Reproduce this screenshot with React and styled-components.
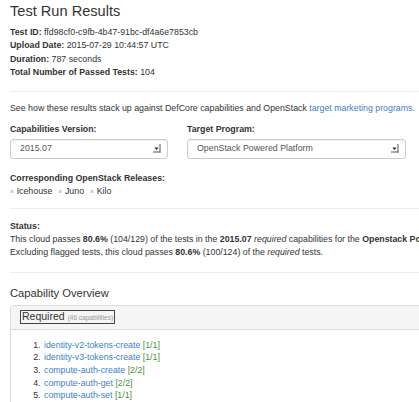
import React from "react";
import styled, { createGlobalStyle } from "styled-components";

const Global = createGlobalStyle`
  html, body { margin: 0; padding: 0; background: #fff; }
  body {
    font-family: "Liberation Sans", Arial, Helvetica, sans-serif;
    font-size: 8.8px;
    line-height: 13.33px;
    color: #333;
    overflow: hidden;
  }
`;

const Page = styled.div`
  width: 714px;
  padding: 0 10px;
  box-sizing: border-box;
`;

const Title = styled.h3`
  margin: 0;
  padding-top: 1px;
  font-size: 14.6px;
  line-height: 20px;
  font-weight: 400;
  color: #333;
`;

const InfoList = styled.div`
  margin-top: 5px;
  display: flex;
  flex-direction: column;
`;

const InfoLine = styled.div`
  line-height: 13.33px;
`;

const Strong = styled.strong`
  font-weight: 700;
`;

const Rule = styled.hr`
  border: 0;
  border-top: 1px solid #eee;
  margin: ${(p) => p.$top}px 0 ${(p) => p.$bottom}px;
`;

const Para = styled.p`
  margin: 0 0 7px;
`;

const Link = styled.a`
  color: #3f80c4;
  text-decoration: none;
`;

const Row = styled.div`
  display: flex;
  gap: 19px;
`;

const Field = styled.div`
  width: ${(p) => p.$w}px;
  display: flex;
  flex-direction: column;
  gap: 3px;
`;

const Label = styled.label`
  font-weight: 700;
`;

const SelectBox = styled.div`
  height: 20px;
  box-sizing: border-box;
  border: 1px solid #ccc;
  border-radius: 3px;
  box-shadow: inset 0 1px 1px rgba(0, 0, 0, 0.06);
  display: flex;
  align-items: center;
  justify-content: space-between;
  padding: 0 6px 0 9px;
  color: #555;
`;

const Releases = styled.div`
  margin-top: 13px;
`;

const ReleaseList = styled.div`
  display: flex;
  gap: 6px;
`;

const Release = styled.span`
  &::before {
    content: "»";
    color: #999;
    font-size: 6.5px;
    margin-right: 3px;
  }
`;

const StatusBlock = styled.div``;

const SectionTitle = styled.h4`
  margin: 0;
  font-size: 11.2px;
  line-height: 16px;
  font-weight: 400;
  color: #333;
`;

const Panel = styled.div`
  margin-top: 4px;
  border: 1px solid #ddd;
  border-radius: 3px;
  box-shadow: 0 1px 1px rgba(0, 0, 0, 0.05);
`;

const PanelHeader = styled.div`
  background: #f5f5f5;
  border-bottom: 1px solid #ddd;
  height: 24px;
  box-sizing: border-box;
  display: flex;
  align-items: center;
  padding-left: 9px;
`;

const Toggle = styled.span`
  border: 1px solid #444;
  padding: 0 1px;
  line-height: 10px;
  display: inline-flex;
  align-items: baseline;
  gap: 3px;
`;

const ToggleMain = styled.span`
  font-size: 10.5px;
  color: #333;
`;

const ToggleSub = styled.span`
  font-size: 6.5px;
  color: #999;
`;

const PanelBody = styled.div`
  padding: 9px 10px 10px;
`;

const CapList = styled.ol`
  margin: 0;
  padding-left: 22px;
  line-height: 12.7px;
  li { padding-left: 1px; }
`;

const Count = styled.span`
  color: #4c8f3e;
`;

function DropArrow() {
  return (
    <svg width="8" height="9" viewBox="0 0 8 9">
      <path d="M1.5 3.5 L5.5 3.5 L3.5 6 Z" fill="#222" />
      <line x1="7" y1="0" x2="7" y2="8.5" stroke="#555" strokeWidth="1" />
      <line x1="0" y1="8" x2="7.5" y2="8" stroke="#555" strokeWidth="1" />
    </svg>
  );
}

const caps = [
  ["identity-v2-tokens-create", "[1/1]"],
  ["identity-v3-tokens-create", "[1/1]"],
  ["compute-auth-create", "[2/2]"],
  ["compute-auth-get", "[2/2]"],
  ["compute-auth-set", "[1/1]"],
];

export default function App() {
  return (
    <>
      <Global />
      <Page>
        <Title>Test Run Results</Title>
        <InfoList>
          <InfoLine><Strong>Test ID:</Strong> ffd98cf0-c9fb-4b47-91bc-df4a6e7853cb</InfoLine>
          <InfoLine><Strong>Upload Date:</Strong> 2015-07-29 10:44:57 UTC</InfoLine>
          <InfoLine><Strong>Duration:</Strong> 787 seconds</InfoLine>
          <InfoLine><Strong>Total Number of Passed Tests:</Strong> 104</InfoLine>
        </InfoList>
        <Rule $top={12} $bottom={10} />
        <Para>
          See how these results stack up against DefCore capabilities and OpenStack{" "}
          <Link href="#">target marketing programs.</Link>
        </Para>
        <Row>
          <Field $w={158}>
            <Label>Capabilities Version:</Label>
            <SelectBox>2015.07<DropArrow /></SelectBox>
          </Field>
          <Field $w={219}>
            <Label>Target Program:</Label>
            <SelectBox>OpenStack Powered Platform<DropArrow /></SelectBox>
          </Field>
        </Row>
        <Releases>
          <Strong>Corresponding OpenStack Releases:</Strong>
          <ReleaseList>
            <Release>Icehouse</Release>
            <Release>Juno</Release>
            <Release>Kilo</Release>
          </ReleaseList>
        </Releases>
        <Rule $top={9} $bottom={11} />
        <StatusBlock>
          <Strong>Status:</Strong>
          <div>
            This cloud passes <Strong>80.6%</Strong> (104/129) of the tests in the{" "}
            <Strong>2015.07</Strong> <em>required</em> capabilities for the{" "}
            <Strong>Openstack Powered Platform</Strong> program.
          </div>
          <div>
            Excluding flagged tests, this cloud passes <Strong>80.6%</Strong> (100/124) of the{" "}
            <em>required</em> tests.
          </div>
        </StatusBlock>
        <Rule $top={12} $bottom={12} />
        <SectionTitle>Capability Overview</SectionTitle>
        <Panel>
          <PanelHeader>
            <Toggle>
              <ToggleMain>Required</ToggleMain>
              <ToggleSub>(46 capabilities)</ToggleSub>
            </Toggle>
          </PanelHeader>
          <PanelBody>
            <CapList>
              {caps.map(([name, count]) => (
                <li key={name}>
                  <Link href="#">{name}</Link> <Count>{count}</Count>
                </li>
              ))}
            </CapList>
          </PanelBody>
        </Panel>
      </Page>
    </>
  );
}
